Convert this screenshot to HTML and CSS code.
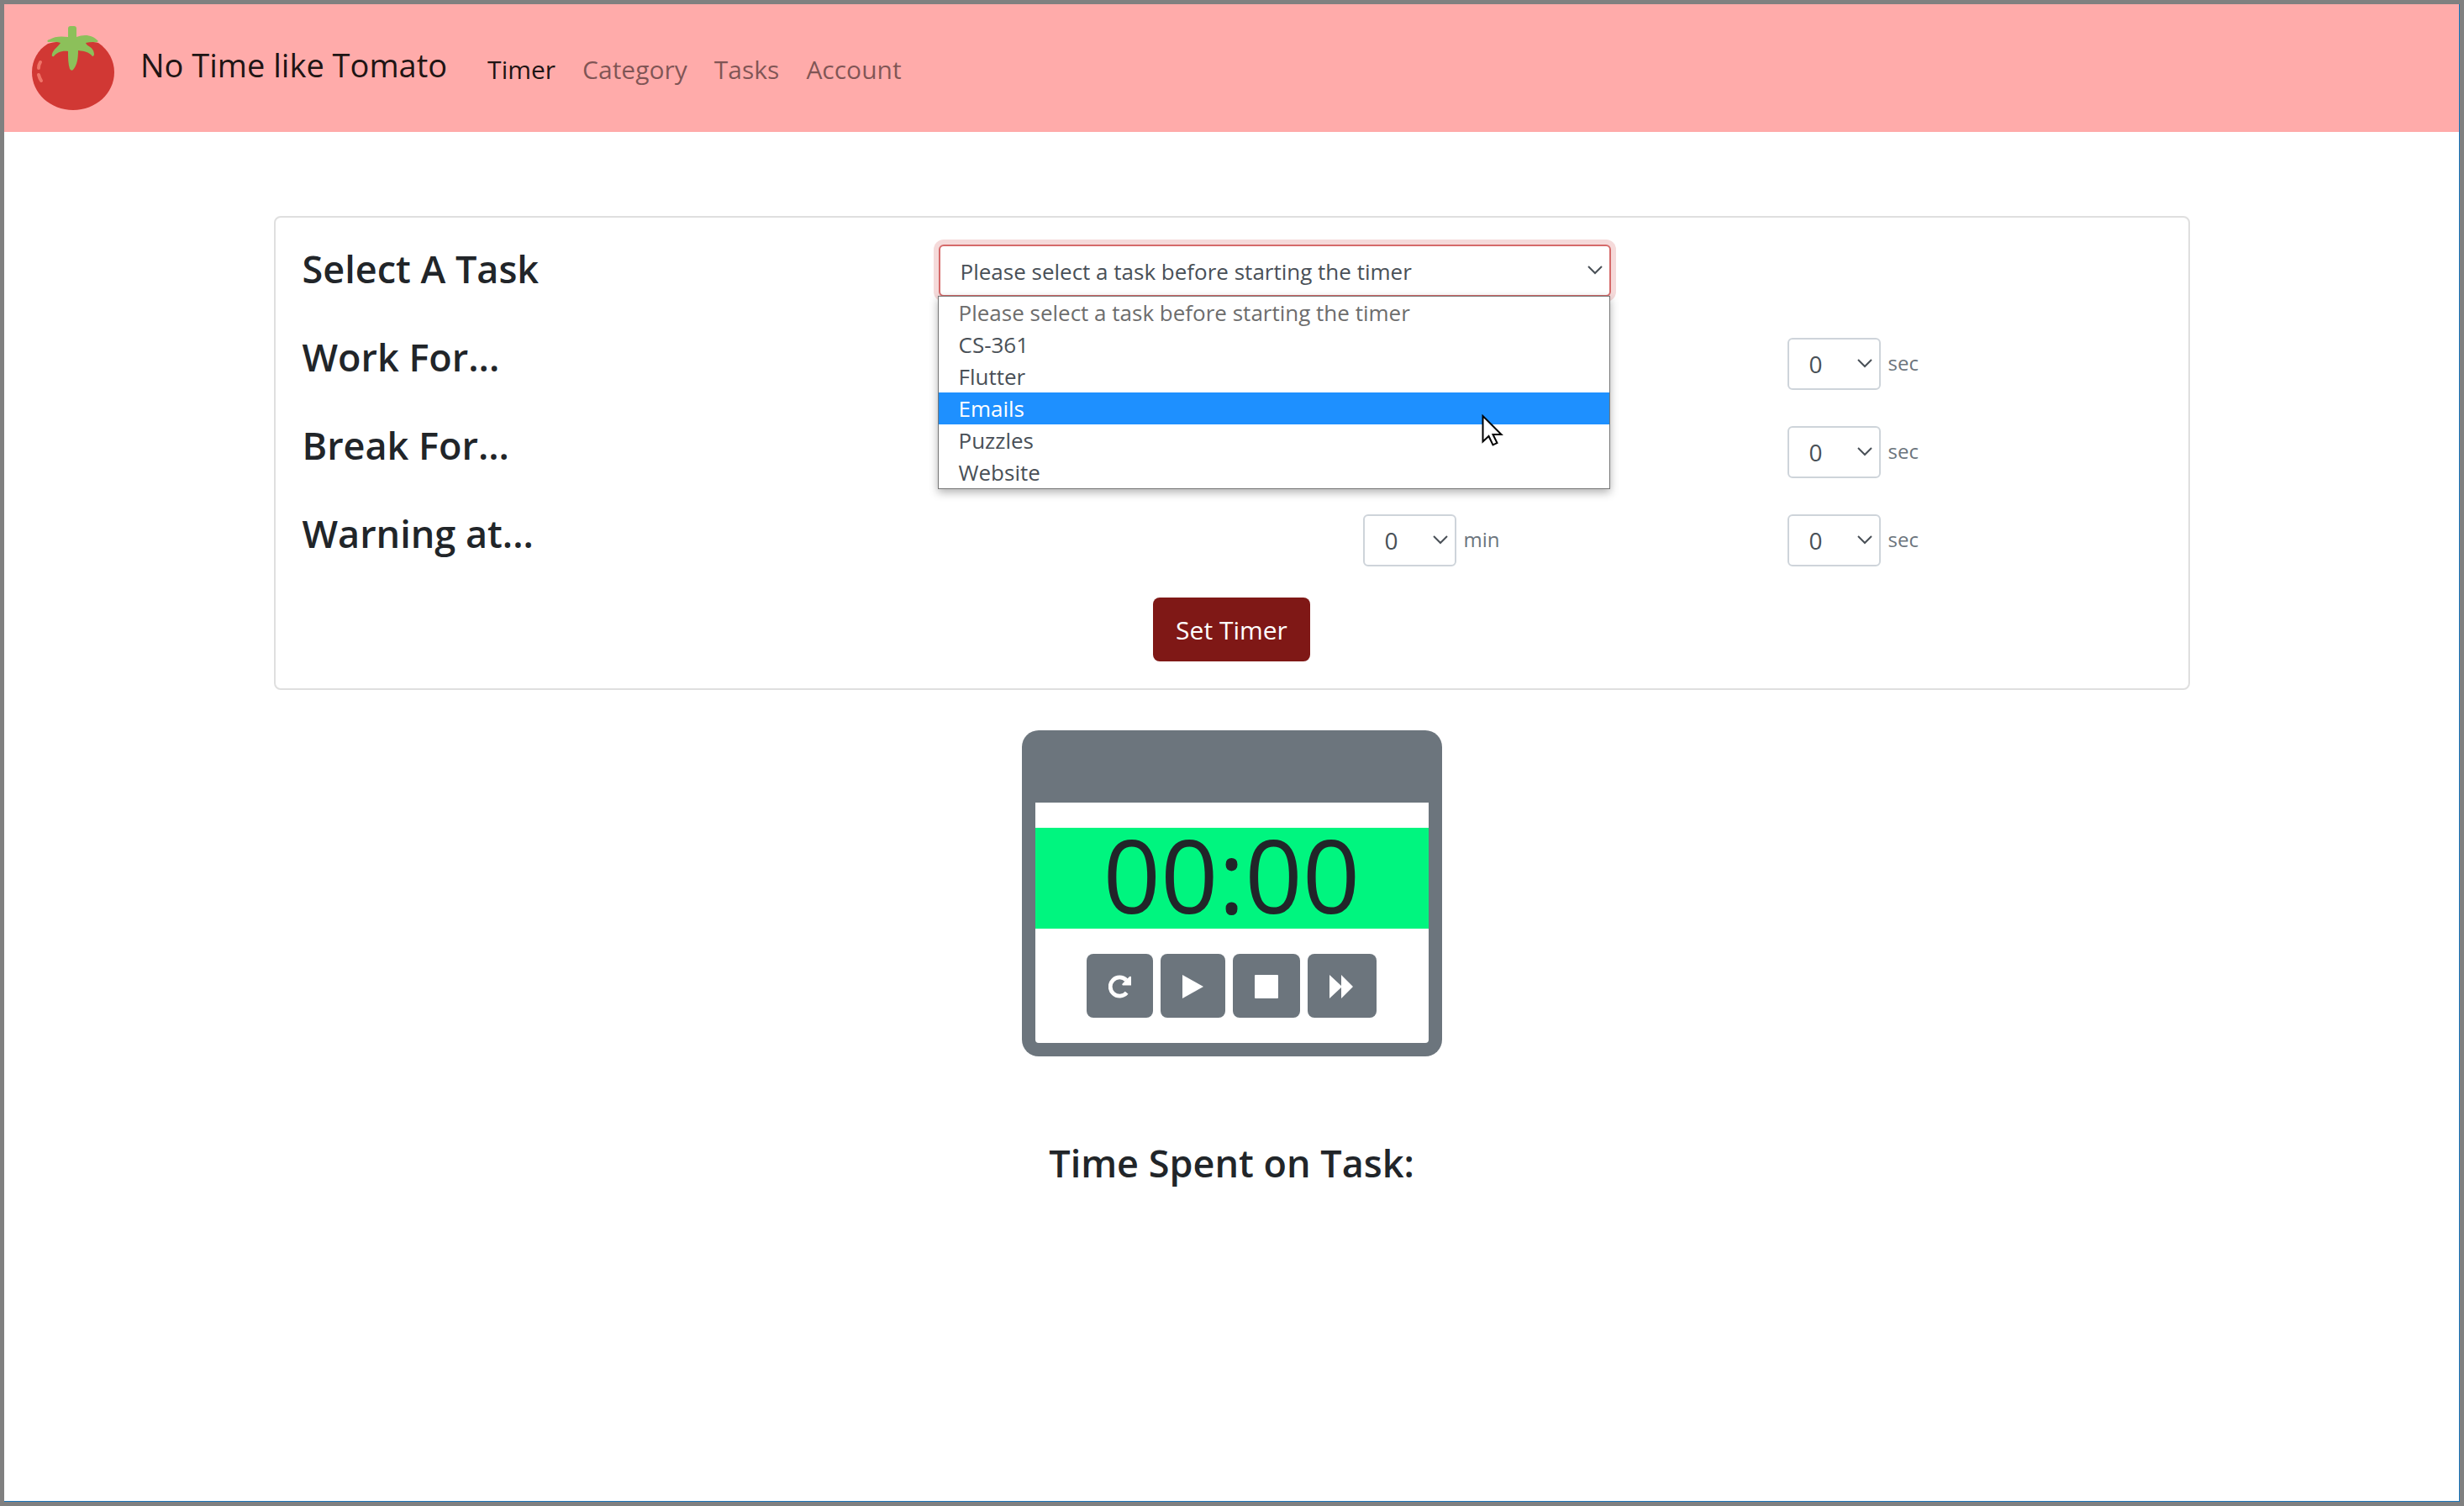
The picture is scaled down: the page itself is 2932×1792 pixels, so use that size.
FILE: index.html
```html
<!DOCTYPE html>
<html lang="en">
<head>
<meta charset="utf-8">
<meta name="viewport" content="width=device-width, initial-scale=1">
<title>No Time like Tomato</title>
<link rel="stylesheet" href="styles.css">
</head>
<body>
<div class="page">
  <header class="navbar">
    <a class="brand" href="#">
      <svg class="brand-logo" viewBox="0 0 100 100" aria-hidden="true">
        <path fill="#d13834" d="M20 21C32 17 68 17 80 20C92 28 99 41 99 55C99 80 77 100 50 100C23 100 1 80 1 55C1 41 8 28 20 21Z"/>
        <path fill="#8cc05a" d="M44 3Q44 0 47 0H51Q54 0 54 3V13C64 9 74 11 80 18Q78 20 74 19Q69 19 65 20C67 25 74 24 75 33Q75 36 73 36C69 31 64 30 56 29C56 38 55 46 50 52Q48 54 46 51C44 45 44 38 44 30C36 29 30 32 27 36Q24 37 25 33C27 27 32 25 35 20Q30 18 20 19Q18 17 22 16C28 12 36 12 44 13Z"/>
        <path fill="none" stroke="#ef7468" stroke-width="4" stroke-linecap="round" d="M11 43Q9 46 9 50M9 58Q10 62 12 65"/>
      </svg>
      <span>No Time like Tomato</span>
    </a>
    <nav class="nav-links">
      <a class="active" href="#">Timer</a>
      <a href="#">Category</a>
      <a href="#">Tasks</a>
      <a href="#">Account</a>
    </nav>
  </header>

  <main class="content">
    <form class="settings">
      <div class="row">
        <label class="row-title" for="task">Select A Task</label>
        <div class="task-picker">
          <select class="select task-select" id="task">
            <option>Please select a task before starting the timer</option>
          </select>
          <ul class="options">
            <li class="muted">Please select a task before starting the timer</li>
            <li>CS-361</li>
            <li>Flutter</li>
            <li class="hover">Emails</li>
            <li>Puzzles</li>
            <li>Website</li>
          </ul>
          <svg class="pointer" viewBox="0 0 26 38" aria-hidden="true">
            <path fill="#fff" stroke="#000" stroke-width="2" d="M1.500 2V32.500L8.500 26L13.500 36.500L18.500 34L13.500 24H23.500Z"/>
          </svg>
        </div>
      </div>
      <div class="row">
        <h2 class="row-title">Work For...</h2>
        <div class="field seconds">
          <select class="select" id="work-sec"><option>0</option></select>
          <label for="work-sec">sec</label>
        </div>
      </div>
      <div class="row">
        <h2 class="row-title">Break For...</h2>
        <div class="field seconds">
          <select class="select" id="break-sec"><option>0</option></select>
          <label for="break-sec">sec</label>
        </div>
      </div>
      <div class="row">
        <h2 class="row-title">Warning at...</h2>
        <div class="field minutes">
          <select class="select" id="warn-min"><option>0</option></select>
          <label for="warn-min">min</label>
        </div>
        <div class="field seconds">
          <select class="select" id="warn-sec"><option>0</option></select>
          <label for="warn-sec">sec</label>
        </div>
      </div>
      <button class="set-button" type="button">Set Timer</button>
    </form>

    <section class="clock">
      <div class="clock-body">
        <div class="clock-time">00:00</div>
        <div class="clock-controls">
          <button type="button" aria-label="Restart">
            <svg width="27" height="28" viewBox="0 0 28 28"><path fill="none" stroke="#fff" stroke-width="5" d="M22.500 21.500A11.500 11.500 0 1 1 22 6"/><path fill="#fff" d="M28 2V12.500H18Q16 12 17.500 10L26 1.500Q28 1 28 2Z"/></svg>
          </button>
          <button type="button" aria-label="Play">
            <svg width="25" height="28" viewBox="0 0 25 28"><path fill="#fff" d="M0 0L25 14L0 28Z"/></svg>
          </button>
          <button type="button" aria-label="Stop">
            <svg width="28" height="28" viewBox="0 0 28 28"><rect fill="#fff" width="28" height="28" rx="1"/></svg>
          </button>
          <button type="button" aria-label="Skip">
            <svg width="30" height="28" viewBox="0 0 30 28"><path fill="#fff" d="M0 0L14 13V0L28 14L14 28V15L0 28Z"/></svg>
          </button>
        </div>
      </div>
    </section>

    <h2 class="spent">Time Spent on Task:</h2>
  </main>
</div>
</body>
</html>
```
FILE: styles.css
```css
* {
  box-sizing: border-box;
}

body {
  margin: 0;
  border: 5px solid #808080;
  font-family: "Open Sans", "Noto Sans", sans-serif;
  color: #212529;
  background: #fff;
}

.page {
  min-height: calc(100vh - 10px);
  border: solid #1b75bb;
  border-width: 0 1px 1px 0;
}

.navbar {
  display: flex;
  align-items: center;
  padding: 26px 32px;
  background: #ffabaa;
}

.brand {
  display: flex;
  gap: 30px;
  margin-right: 48px;
  font-size: 38px;
  line-height: 92px;
  color: rgba(0, 0, 0, 0.9);
  text-decoration: none;
}

.brand-logo {
  width: 100px;
  height: 100px;
}

.nav-links {
  display: flex;
  gap: 32px;
  padding-top: 4px;
  font-size: 30px;
  line-height: 48px;
}

.nav-links a {
  color: rgba(0, 0, 0, 0.5);
  text-decoration: none;
}

.nav-links .active {
  color: rgba(0, 0, 0, 0.9);
}

.content {
  display: flex;
  flex-direction: column;
  align-items: center;
  padding: 100px 0;
}

.settings {
  display: flex;
  flex-direction: column;
  gap: 37px;
  width: 80%;
  max-width: 2280px;
  padding: 32px;
  border: 2px solid #dfdfdf;
  border-radius: 8px;
}

.row {
  display: grid;
  grid-template-columns: 757fr 505fr 505fr 445fr;
  min-height: 68px;
}

.row-title,
.spent {
  margin: 0;
  font-size: 45px;
  line-height: 58px;
  font-weight: 600;
}

.select {
  display: block;
  width: 111px;
  height: 62px;
  padding: 0 24px;
  border: 2px solid #ced4da;
  border-radius: 6px;
  appearance: none;
  font: inherit;
  font-size: 28px;
  color: #495057;
  background: #fff url("data:image/svg+xml,%3Csvg xmlns='http://www.w3.org/2000/svg' width='20' height='12' viewBox='0 0 20 12'%3E%3Cpath d='M2 1l8 8 8-8' fill='none' stroke='%23495057' stroke-width='2'/%3E%3C/svg%3E") no-repeat right 7px center;
}

.task-picker {
  position: relative;
  grid-column: 2 / 4;
  justify-self: start;
  width: 800px;
  max-width: 100%;
}

.task-select {
  width: 100%;
  padding-top: 2px;
  border-color: #d56a6a;
  box-shadow: 0 0 0 6px #f5dada;
  font-size: 26px;
}

.options {
  position: absolute;
  z-index: 1;
  top: 61px;
  left: -1px;
  width: 100%;
  margin: 0;
  padding: 0;
  border: 1px solid #767676;
  list-style: none;
  font-size: 26px;
  line-height: 38px;
  color: #495057;
  background: #fff;
  box-shadow: 0 4px 10px rgba(0, 0, 0, 0.3);
}

.options li {
  padding: 0 24px;
}

.options .muted {
  color: #6d6d6d;
}

.options .hover {
  color: #fff;
  background: #1e90ff;
}

.pointer {
  position: absolute;
  z-index: 2;
  top: 202px;
  left: 646px;
  width: 26px;
  height: 38px;
}

.field {
  display: flex;
  align-items: center;
  gap: 9px;
  padding-top: 6px;
  font-size: 24px;
  color: #6c757d;
}

.field label {
  padding-bottom: 3px;
}

.minutes {
  grid-column: 3;
}

.seconds {
  grid-column: 4;
}

.set-button {
  align-self: center;
  height: 76px;
  padding: 0 27px;
  border: 0;
  border-radius: 8px;
  font: inherit;
  font-size: 30px;
  color: #fff;
  background: #7f1816;
}

.clock {
  width: 500px;
  margin-top: 48px;
  padding: 86px 16px 16px;
  border-radius: 20px;
  background: #6c757d;
}

.clock-body {
  display: flex;
  flex-direction: column;
  gap: 30px;
  padding: 30px 0;
  border-radius: 0 0 4px 4px;
  background: #fff;
}

.clock-time {
  padding-bottom: 8px;
  font-size: 120px;
  line-height: 112px;
  text-align: center;
  background: #00f57f;
}

.clock-controls {
  display: flex;
  justify-content: center;
  gap: 9px;
}

.clock-controls button {
  display: flex;
  padding: 25px 26px 23px;
  border: 0;
  border-radius: 8px;
  background: #6c757d;
}

.spent {
  margin-top: 98px;
}
```
